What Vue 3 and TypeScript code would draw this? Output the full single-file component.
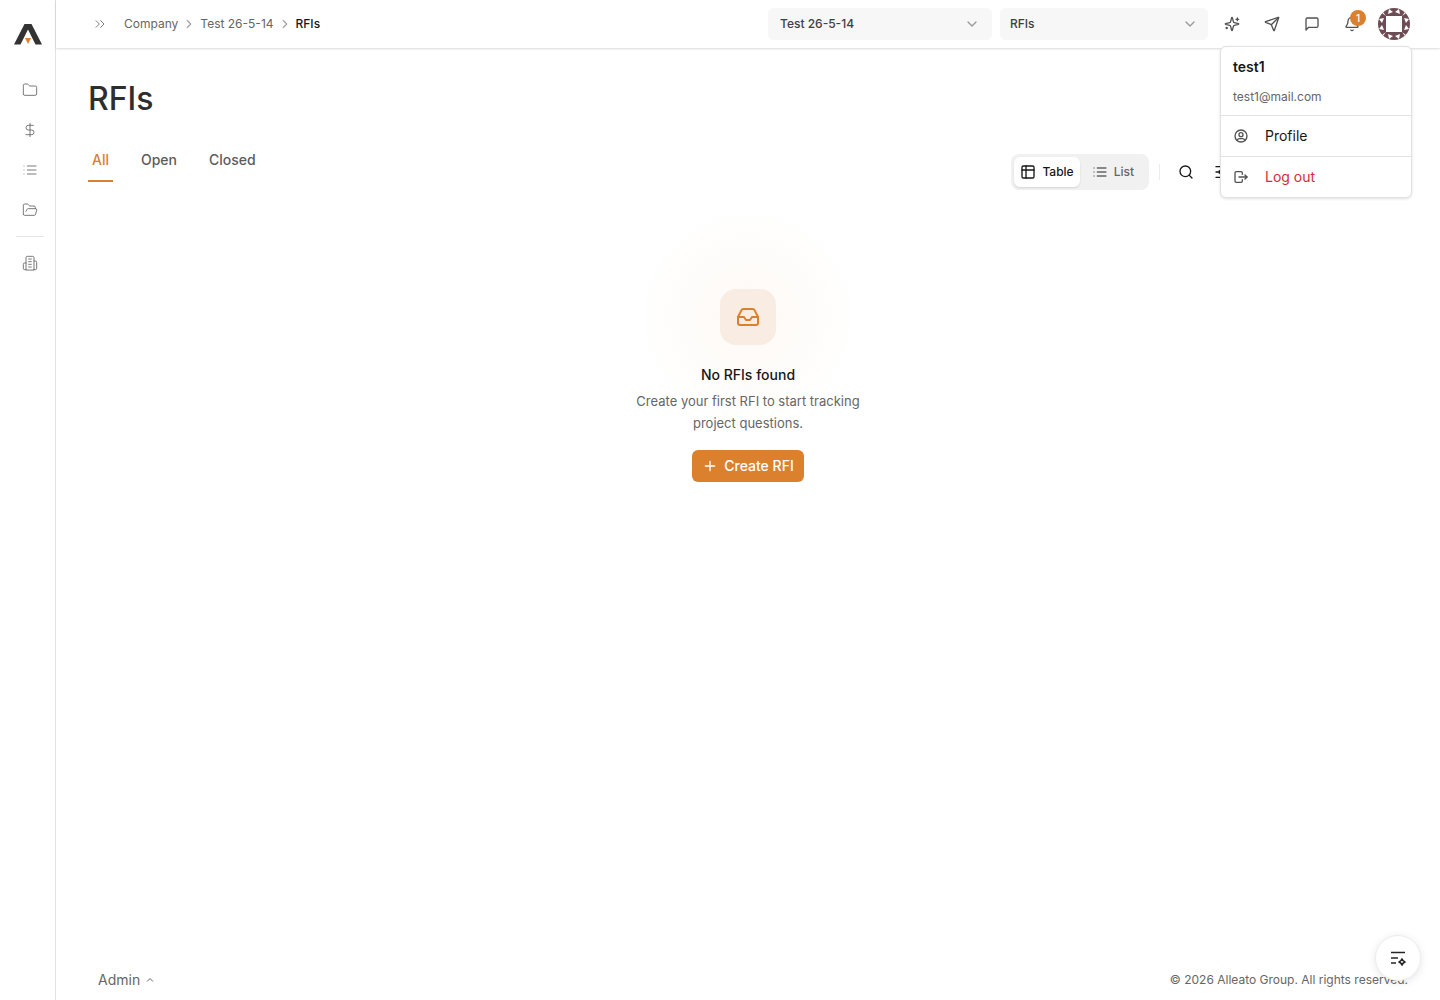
<script setup lang="ts">
import { ref } from 'vue'

interface NavItem {
  label: string
  paths: string[]
}

const mainNav: NavItem[] = [
  {
    label: 'Projects',
    paths: ['M20 20a2 2 0 0 0 2-2V8a2 2 0 0 0-2-2h-7.900a2 2 0 0 1-1.690-.9L9.600 3.900A2 2 0 0 0 7.930 3H4a2 2 0 0 0-2 2v13a2 2 0 0 0 2 2Z'],
  },
  {
    label: 'Financials',
    paths: ['M12 2v20', 'M17 5H9.500a3.500 3.500 0 0 0 0 7h5a3.500 3.500 0 0 1 0 7H6'],
  },
  {
    label: 'Tools',
    paths: ['M3 6h.01', 'M3 12h.01', 'M3 18h.01', 'M8 6h13', 'M8 12h13', 'M8 18h13'],
  },
  {
    label: 'Documents',
    paths: ['m6 14 1.500-2.900A2 2 0 0 1 9.240 10H20a2 2 0 0 1 1.940 2.500l-1.540 6a2 2 0 0 1-1.950 1.500H4a2 2 0 0 1-2-2V5a2 2 0 0 1 2-2h3.900a2 2 0 0 1 1.690.9l.81 1.200a2 2 0 0 0 1.670.9H18a2 2 0 0 1 2 2v2'],
  },
]

const companyNav: NavItem[] = [
  {
    label: 'Company',
    paths: [
      'M6 22V4a2 2 0 0 1 2-2h8a2 2 0 0 1 2 2v18Z',
      'M6 12H4a2 2 0 0 0-2 2v6a2 2 0 0 0 2 2h2',
      'M18 9h2a2 2 0 0 1 2 2v9a2 2 0 0 1-2 2h-2',
      'M10 6h4', 'M10 10h4', 'M10 14h4', 'M10 18h4',
    ],
  },
]

const tabs = ['All', 'Open', 'Closed']
const activeTab = ref('All')
const view = ref<'table' | 'list'>('table')
const project = ref('Test 26-5-14')
const tool = ref('RFIs')
const quarterTurns = [0, 90, 180, 270]
</script>

<template>
  <div class="shell">
    <aside class="sidebar">
      <a href="#" class="logo" aria-label="Home">
        <svg width="28" height="22" viewBox="0 0 28 22">
          <path d="M10.500 0h7L28 20.500h-6.500L14 5.500 6.500 20.500H0Z" fill="#333" />
          <path d="M11 14h6l-3 6Z" fill="#e07f35" />
        </svg>
      </a>
      <nav class="nav">
        <a v-for="item in mainNav" :key="item.label" href="#" class="nav-link" :aria-label="item.label">
          <svg class="icon thin" viewBox="0 0 24 24"><path v-for="d in item.paths" :key="d" :d="d" /></svg>
        </a>
      </nav>
      <nav class="nav nav-company">
        <a v-for="item in companyNav" :key="item.label" href="#" class="nav-link" :aria-label="item.label">
          <svg class="icon thin" viewBox="0 0 24 24"><path v-for="d in item.paths" :key="d" :d="d" /></svg>
        </a>
      </nav>
    </aside>

    <div class="page">
      <header class="topbar">
        <button type="button" class="expand" aria-label="Expand sidebar">
          <svg class="icon thin" viewBox="0 0 24 24"><path d="m6 17 5-5-5-5" /><path d="m13 17 5-5-5-5" /></svg>
        </button>
        <nav class="crumbs" aria-label="Breadcrumb">
          <a href="#">Company</a>
          <svg class="crumb-sep" viewBox="0 0 24 24"><path d="m9 18 6-6-6-6" /></svg>
          <a href="#">Test 26-5-14</a>
          <svg class="crumb-sep" viewBox="0 0 24 24"><path d="m9 18 6-6-6-6" /></svg>
          <span class="current" aria-current="page">RFIs</span>
        </nav>

        <div class="actions">
          <div class="picker picker-project">
            <select v-model="project" aria-label="Project"><option>Test 26-5-14</option></select>
            <svg class="icon" viewBox="0 0 24 24"><path d="m6 9 6 6 6-6" /></svg>
          </div>
          <div class="picker picker-tool">
            <select v-model="tool" aria-label="Tool"><option>RFIs</option></select>
            <svg class="icon" viewBox="0 0 24 24"><path d="m6 9 6 6 6-6" /></svg>
          </div>
          <button type="button" class="icon-btn" aria-label="Assistant">
            <svg class="icon" viewBox="0 0 24 24">
              <path d="M9.937 15.500A2 2 0 0 0 8.500 14.063l-6.135-1.582a.5.5 0 0 1 0-.962L8.500 9.936A2 2 0 0 0 9.937 8.500l1.582-6.135a.5.5 0 0 1 .963 0L14.063 8.500A2 2 0 0 0 15.500 9.937l6.135 1.581a.5.5 0 0 1 0 .964L15.500 14.063a2 2 0 0 0-1.437 1.437l-1.582 6.135a.5.5 0 0 1-.963 0z" />
              <path d="M20 3v4" /><path d="M22 5h-4" /><path d="M4 17v2" /><path d="M5 18H3" />
            </svg>
          </button>
          <button type="button" class="icon-btn" aria-label="Send">
            <svg class="icon" viewBox="0 0 24 24">
              <path d="M14.536 21.686a.5.5 0 0 0 .937-.024l6.500-19a.496.496 0 0 0-.635-.635l-19 6.500a.5.5 0 0 0-.024.937l7.930 3.180a2 2 0 0 1 1.112 1.110z" />
              <path d="m21.854 2.147-10.940 10.939" />
            </svg>
          </button>
          <button type="button" class="icon-btn" aria-label="Messages">
            <svg class="icon" viewBox="0 0 24 24"><path d="M21 15a2 2 0 0 1-2 2H7l-4 4V5a2 2 0 0 1 2-2h14a2 2 0 0 1 2 2z" /></svg>
          </button>
          <button type="button" class="icon-btn" aria-label="Notifications">
            <svg class="icon" viewBox="0 0 24 24">
              <path d="M10.268 21a2 2 0 0 0 3.464 0" />
              <path d="M3.262 15.326A1 1 0 0 0 4 17h16a1 1 0 0 0 .74-1.673C19.410 13.956 18 12.499 18 8A6 6 0 0 0 6 8c0 4.499-1.411 5.956-2.738 7.326" />
            </svg>
            <span class="badge">1</span>
          </button>

          <div class="account">
            <button type="button" class="avatar" aria-label="Account" aria-expanded="true">
              <svg width="32" height="32" viewBox="0 0 32 32">
                <rect width="32" height="32" fill="#6d4c56" />
                <g v-for="turn in quarterTurns" :key="turn" :transform="`rotate(${turn} 16 16)`" fill="#fff">
                  <path d="M11 1 15 4 10 6ZM21 1 17 4 22 6ZM5 4 8 8 4 5Z" />
                </g>
                <rect x="8" y="8" width="16" height="16" fill="#fff" />
              </svg>
            </button>
            <div class="menu">
              <div class="menu-head">
                <strong>test1</strong>
                <span>test1@mail.com</span>
              </div>
              <a href="#" class="menu-item">
                <svg class="icon" viewBox="0 0 24 24">
                  <circle cx="12" cy="12" r="9" /><circle cx="12" cy="10" r="3" />
                  <path d="M6.168 18.849A4 4 0 0 1 10 16h4a4 4 0 0 1 3.834 2.855" />
                </svg>
                Profile
              </a>
              <button type="button" class="menu-item danger">
                <svg class="icon" viewBox="0 0 24 24">
                  <path d="M14 8V6a2 2 0 0 0-2-2H5a2 2 0 0 0-2 2v12a2 2 0 0 0 2 2h7a2 2 0 0 0 2-2v-2" />
                  <path d="M9 12h12l-3-3" /><path d="m18 15 3-3" />
                </svg>
                Log out
              </button>
            </div>
          </div>
        </div>
      </header>

      <main class="content">
        <h1>RFIs</h1>
        <div class="controls">
          <div class="tabs" role="tablist">
            <button
              v-for="tab in tabs" :key="tab" type="button" role="tab" class="tab"
              :class="{ active: tab === activeTab }" :aria-selected="tab === activeTab"
              @click="activeTab = tab"
            >{{ tab }}</button>
          </div>
          <div class="toolbar">
            <div class="switch">
              <button type="button" :class="{ on: view === 'table' }" @click="view = 'table'">
                <svg class="icon" viewBox="0 0 24 24"><rect x="3" y="3" width="18" height="18" rx="2" /><path d="M3 9h18" /><path d="M9 3v18" /></svg>
                Table
              </button>
              <button type="button" :class="{ on: view === 'list' }" @click="view = 'list'">
                <svg class="icon" viewBox="0 0 24 24"><path d="M3 6h.01M3 12h.01M3 18h.01M8 6h13M8 12h13M8 18h13" /></svg>
                List
              </button>
            </div>
            <span class="rule"></span>
            <button type="button" class="tool-btn" aria-label="Search">
              <svg class="icon" viewBox="0 0 24 24"><circle cx="11" cy="11" r="8" /><path d="m21 21-4.300-4.300" /></svg>
            </button>
            <button type="button" class="tool-btn" aria-label="Filters">
              <svg class="icon" viewBox="0 0 24 24"><path d="M21 4h-7M10 4H3M21 12h-9M8 12H3M21 20h-5M12 20H3M14 2v4M8 10v4M16 18v4" /></svg>
            </button>
          </div>
        </div>

        <section class="empty">
          <div class="empty-icon">
            <svg class="icon" viewBox="0 0 24 24">
              <path d="M22 12h-6l-2 3h-4l-2-3H2" />
              <path d="M5.450 5.110 2 12v6a2 2 0 0 0 2 2h16a2 2 0 0 0 2-2v-6l-3.450-6.890A2 2 0 0 0 16.760 4H7.240a2 2 0 0 0-1.790 1.110z" />
            </svg>
          </div>
          <h2>No RFIs found</h2>
          <p>Create your first RFI to start tracking project questions.</p>
          <button type="button" class="primary">
            <svg class="icon" viewBox="0 0 24 24"><path d="M5 12h14M12 5v14" /></svg>
            Create RFI
          </button>
        </section>
      </main>

      <footer class="footer">
        <button type="button" class="admin">
          Admin
          <svg viewBox="0 0 24 24"><path d="m18 15-6-6-6 6" /></svg>
        </button>
        <small>© 2026 Alleato Group. All rights reserved.</small>
      </footer>
    </div>

    <button type="button" class="fab" aria-label="Ask the assistant">
      <svg width="20" height="20" viewBox="0 0 20 20">
        <path d="M3 4.500h14M3 10h7M3 15h5" fill="none" stroke="#262626" stroke-width="1.700" />
        <path d="M14 11q.8 2.200 3 3-2.200.8-3 3-.8-2.200-3-3 2.200-.8 3-3Z" fill="#fff" stroke="#262626" stroke-width="1.700" stroke-linejoin="round" />
      </svg>
    </button>
  </div>
</template>

<style>
body {
  margin: 0;
  background: #fff;
}
</style>

<style scoped>
.shell {
  display: flex;
  min-height: 100vh;
  font-family: Inter, "Liberation Sans", sans-serif;
  font-size: 14px;
  line-height: 20px;
  color: #171717;
}

.shell * {
  box-sizing: border-box;
}

a {
  color: inherit;
  text-decoration: none;
}

button {
  padding: 0;
  border: 0;
  background: none;
  font: inherit;
  color: inherit;
  cursor: pointer;
}

svg {
  display: block;
  flex: none;
}

.icon {
  width: 16px;
  height: 16px;
  fill: none;
  stroke: currentColor;
  stroke-width: 2;
  stroke-linecap: round;
  stroke-linejoin: round;
}

.thin {
  stroke-width: 1.25;
}

.sidebar {
  flex: none;
  box-sizing: border-box;
  width: 56px;
  border-right: 1px solid #e2e2e2;
}

.logo {
  display: flex;
  justify-content: center;
  padding: 24px 0;
}

.nav {
  display: flex;
  flex-direction: column;
  gap: 8px;
  padding: 4px 11px 10px 16px;
}

.nav-company {
  position: relative;
  padding-top: 11px;
}

.nav-company::before {
  content: "";
  position: absolute;
  top: 0;
  left: 16px;
  right: 11px;
  border-top: 1px solid #e5e5e5;
}

.nav-link {
  display: flex;
  align-items: center;
  justify-content: center;
  height: 32px;
  color: #5f5f5f;
}

.page {
  flex: 1;
  display: flex;
  flex-direction: column;
  min-width: 0;
}

.topbar {
  display: flex;
  align-items: center;
  height: 48px;
  padding: 0 28px 0 36px;
  box-shadow: 0 1px 2px rgba(0, 0, 0, 0.15);
  font-size: 12px;
  line-height: 16px;
}

.expand {
  color: #666;
}

.crumbs {
  display: flex;
  align-items: center;
  gap: 4px;
  margin-left: 16px;
  color: #666;
}

.crumb-sep {
  width: 14px;
  height: 14px;
  fill: none;
  stroke: #a0a0a0;
  stroke-width: 2;
  stroke-linecap: round;
  stroke-linejoin: round;
}

.current {
  font-weight: 500;
  color: #171717;
}

.actions {
  display: flex;
  align-items: center;
  gap: 8px;
  margin-left: auto;
}

.picker {
  position: relative;
}

.picker-project {
  width: 224px;
}

.picker-tool {
  width: 208px;
}

.picker select {
  width: 100%;
  height: 32px;
  padding: 0 32px 0 12px;
  border: 0;
  border-radius: 6px;
  background: #f7f7f7;
  appearance: none;
  font: inherit;
  font-weight: 500;
  color: #404040;
}

.picker-tool select {
  padding-left: 10px;
}

.picker .icon {
  position: absolute;
  top: 8px;
  right: 12px;
  color: #999;
  pointer-events: none;
}

.picker-tool .icon {
  right: 10px;
}

.icon-btn {
  position: relative;
  display: flex;
  align-items: center;
  justify-content: center;
  width: 32px;
  height: 32px;
  color: #525252;
}

.badge {
  position: absolute;
  top: 2px;
  right: 2px;
  width: 16px;
  height: 16px;
  border-radius: 8px;
  background: #db802d;
  font-size: 10px;
  font-weight: 500;
  line-height: 16px;
  color: #fff;
}

.account {
  position: relative;
  padding: 0 2px;
}

.avatar {
  display: block;
  width: 32px;
  height: 32px;
  border-radius: 50%;
  overflow: hidden;
}

.menu {
  position: absolute;
  top: 38px;
  right: 0;
  z-index: 2;
  width: 192px;
  border: 1px solid #e2e2e2;
  border-radius: 6px;
  background: #fff;
  box-shadow: 0 1px 3px rgba(0, 0, 0, 0.12);
  font-size: 14px;
  line-height: 20px;
}

.menu-head {
  display: flex;
  flex-direction: column;
  gap: 12px;
  padding: 10px 12px;
}

.menu-head strong {
  font-weight: 600;
}

.menu-head span {
  font-size: 12px;
  line-height: 16px;
  color: #666;
}

.menu-item {
  display: flex;
  align-items: center;
  gap: 16px;
  width: 100%;
  height: 41px;
  padding: 0 12px;
  border-top: 1px solid #e2e2e2;
}

.menu-item .icon {
  color: #525252;
}

.danger {
  color: #d62c36;
}

.content {
  flex: 1;
  padding: 31px 32px 0;
}

h1 {
  margin: 0;
  font-size: 32px;
  font-weight: 500;
  line-height: 40px;
  color: #2e2e2e;
}

.controls {
  display: flex;
  align-items: flex-start;
  justify-content: space-between;
  margin-top: 19px;
}

.tabs {
  display: flex;
  gap: 24px;
}

.tab {
  height: 44px;
  padding: 0 4px;
  border: solid transparent;
  border-width: 2px 0;
  font-weight: 500;
  color: #5c5c5c;
}

.tab.active {
  border-bottom-color: #db802d;
  color: #db802d;
}

.toolbar {
  display: flex;
  align-items: center;
  gap: 4px;
  margin: 16px 170px 0 0;
}

.switch {
  display: flex;
  padding: 3px;
  border-radius: 8px;
  background: #f1f1f1;
  font-size: 12px;
  font-weight: 500;
  color: #666;
}

.switch button {
  display: flex;
  align-items: center;
  gap: 6px;
  height: 30px;
  padding: 0 6px;
  border-radius: 6px;
}

.switch button:last-child {
  padding: 0 12px;
}

.switch .on {
  background: #fff;
  box-shadow: 0 1px 2px rgba(0, 0, 0, 0.12);
  color: #171717;
}

.rule {
  width: 1px;
  height: 16px;
  margin: 0 6px;
  background: #ececec;
}

.tool-btn {
  display: flex;
  align-items: center;
  justify-content: center;
  width: 32px;
  height: 32px;
}

.empty {
  display: flex;
  flex-direction: column;
  align-items: center;
  padding-top: 99px;
  text-align: center;
}

.empty-icon {
  position: relative;
  display: flex;
  align-items: center;
  justify-content: center;
  width: 56px;
  height: 56px;
  border-radius: 16px;
  background: #f9ece2;
  color: #db802d;
}

.empty-icon::before {
  content: "";
  position: absolute;
  inset: -84px;
  z-index: -1;
  background: radial-gradient(circle, rgba(219, 128, 45, 0.05), rgba(219, 128, 45, 0) 110px);
}

.empty-icon .icon {
  width: 24px;
  height: 24px;
}

h2 {
  margin: 20px 0 0;
  font-size: 14px;
  font-weight: 500;
  line-height: 20px;
}

.empty p {
  width: 240px;
  margin: 5px 0 0;
  font-size: 13px;
  line-height: 22px;
  color: #666;
}

.primary {
  display: flex;
  align-items: center;
  gap: 6px;
  height: 32px;
  margin-top: 16px;
  padding: 0 10px;
  border-radius: 6px;
  background: #db802d;
  font-weight: 500;
  color: #fff;
}

.footer {
  display: flex;
  align-items: center;
  justify-content: space-between;
  height: 40px;
  padding: 0 32px 0 42px;
  color: #666;
}

.admin {
  display: flex;
  align-items: center;
  gap: 4px;
}

.admin svg {
  width: 12px;
  height: 12px;
  fill: none;
  stroke: currentColor;
  stroke-width: 2;
}

.footer small {
  font-size: 12px;
}

.fab {
  position: fixed;
  right: 19px;
  bottom: 19px;
  display: flex;
  align-items: center;
  justify-content: center;
  width: 46px;
  height: 46px;
  border: 1px solid #ececec;
  border-radius: 50%;
  background: #fff;
  box-shadow: 0 2px 8px rgba(0, 0, 0, 0.1);
}
</style>
